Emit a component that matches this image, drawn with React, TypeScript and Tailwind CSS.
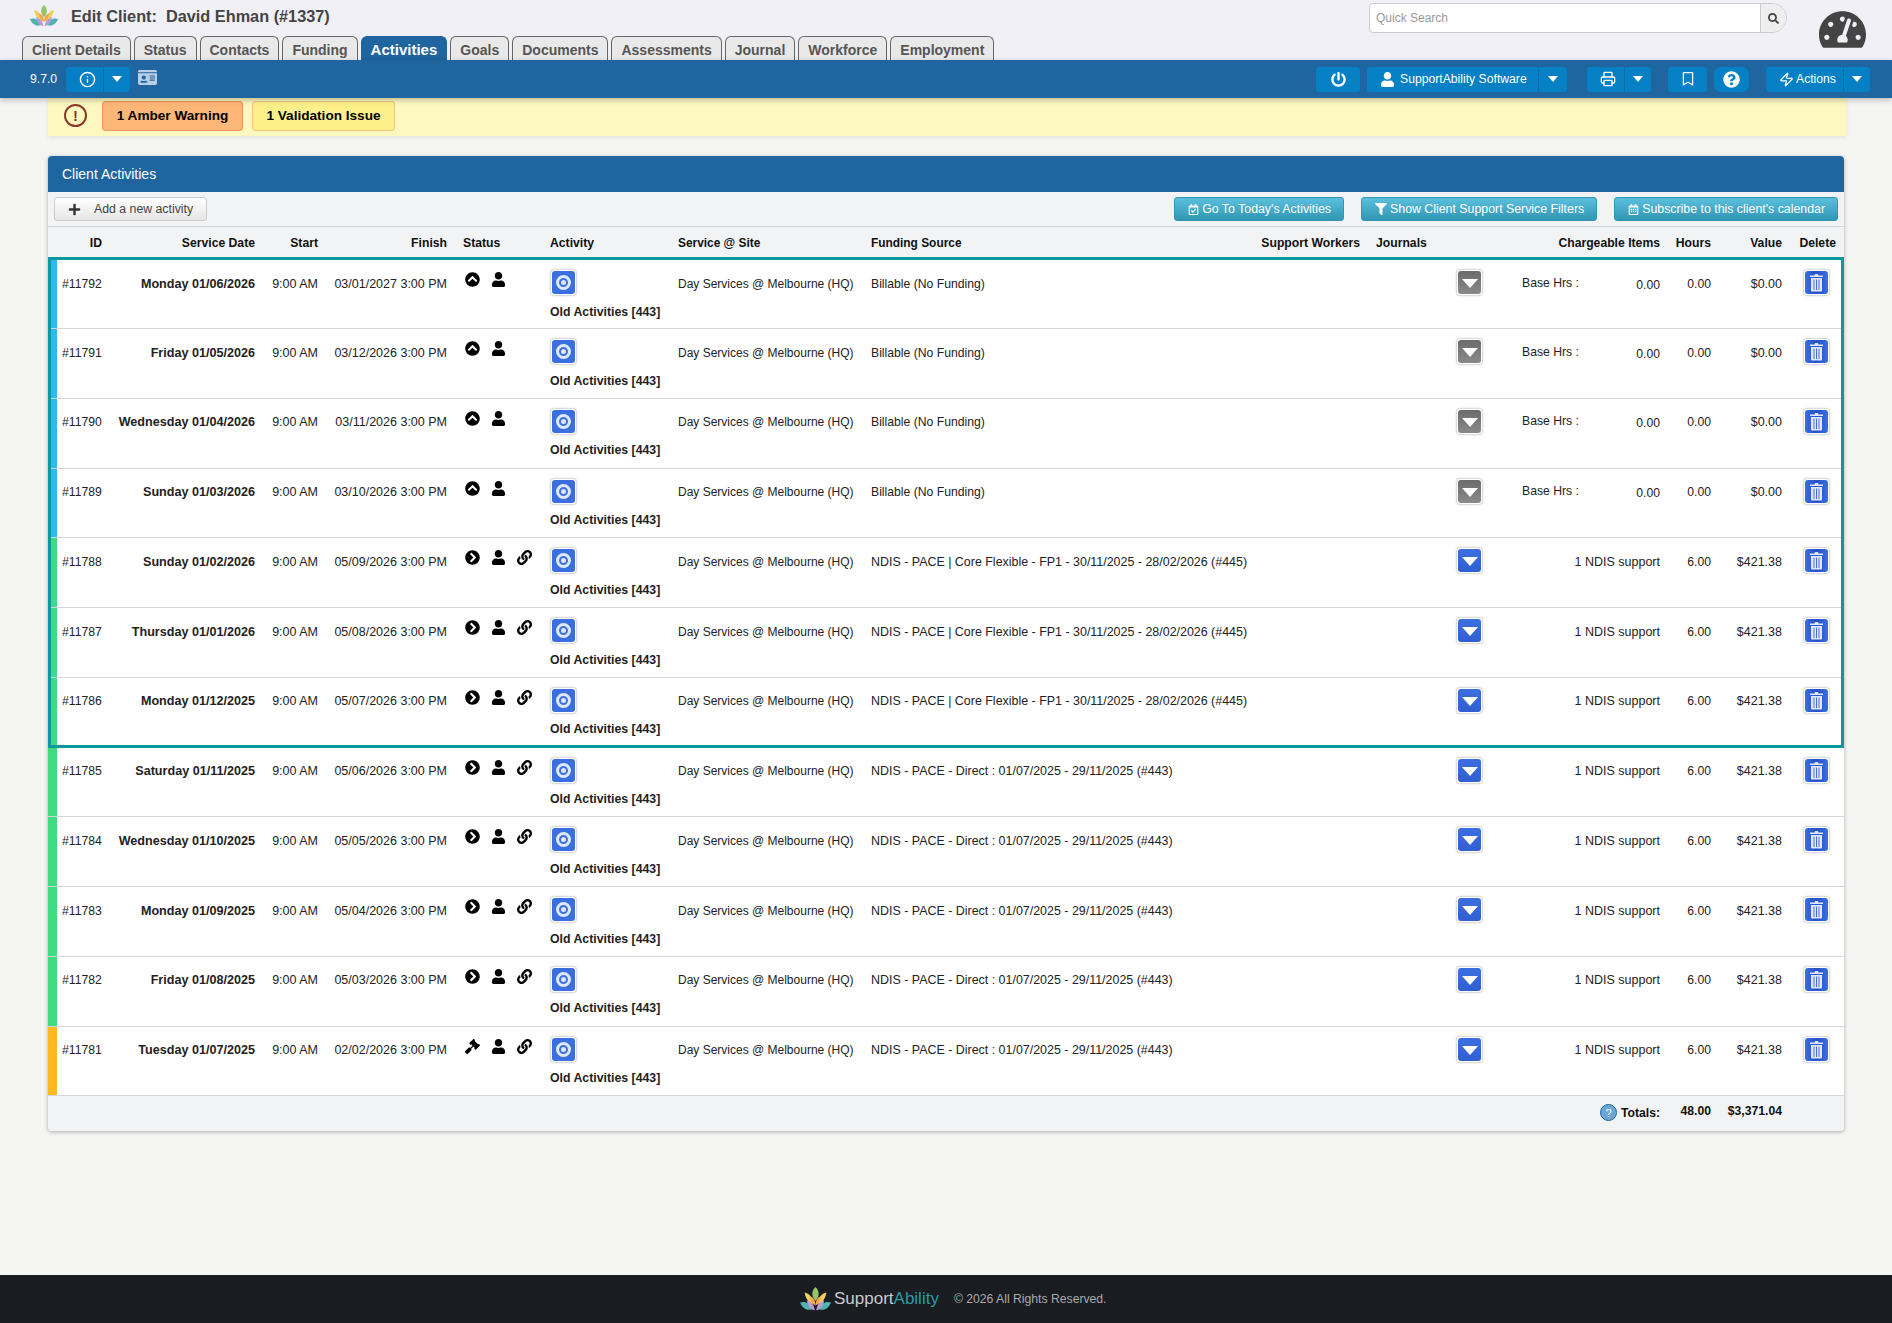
import { ReactNode } from 'react';
import {
  FaChevronCircleRight,
  FaChevronCircleUp,
  FaFilter,
  FaGavel,
  FaIdCard,
  FaLink,
  FaPlus,
  FaPowerOff,
  FaQuestionCircle,
  FaRegBookmark,
  FaRegCalendarAlt,
  FaRegCalendarCheck,
  FaSearch,
  FaTachometerAlt,
  FaUser,
} from 'react-icons/fa';
import { Info, Printer, Zap } from 'lucide-react';

const gridCols =
  'grid grid-cols-[62px_153px_63px_129px_88px_127px_193px_505px_146px_154px_51px_71px_54px]';

const tabs = [
  'Client Details',
  'Status',
  'Contacts',
  'Funding',
  'Activities',
  'Goals',
  'Documents',
  'Assessments',
  'Journal',
  'Workforce',
  'Employment',
];

const CORE = 'NDIS - PACE | Core Flexible - FP1 - 30/11/2025 - 28/02/2026 (#445)';
const DIRECT = 'NDIS - PACE - Direct : 01/07/2025 - 29/11/2025 (#443)';
const NONE = 'Billable (No Funding)';

type Row = { id: string; date: string; finish: string; funding: string; kind: 'up' | 'right' | 'gavel' };

const rows: Row[] = [
  { id: '#11792', date: 'Monday 01/06/2026', finish: '03/01/2027 3:00 PM', funding: NONE, kind: 'up' },
  { id: '#11791', date: 'Friday 01/05/2026', finish: '03/12/2026 3:00 PM', funding: NONE, kind: 'up' },
  { id: '#11790', date: 'Wednesday 01/04/2026', finish: '03/11/2026 3:00 PM', funding: NONE, kind: 'up' },
  { id: '#11789', date: 'Sunday 01/03/2026', finish: '03/10/2026 3:00 PM', funding: NONE, kind: 'up' },
  { id: '#11788', date: 'Sunday 01/02/2026', finish: '05/09/2026 3:00 PM', funding: CORE, kind: 'right' },
  { id: '#11787', date: 'Thursday 01/01/2026', finish: '05/08/2026 3:00 PM', funding: CORE, kind: 'right' },
  { id: '#11786', date: 'Monday 01/12/2025', finish: '05/07/2026 3:00 PM', funding: CORE, kind: 'right' },
  { id: '#11785', date: 'Saturday 01/11/2025', finish: '05/06/2026 3:00 PM', funding: DIRECT, kind: 'right' },
  { id: '#11784', date: 'Wednesday 01/10/2025', finish: '05/05/2026 3:00 PM', funding: DIRECT, kind: 'right' },
  { id: '#11783', date: 'Monday 01/09/2025', finish: '05/04/2026 3:00 PM', funding: DIRECT, kind: 'right' },
  { id: '#11782', date: 'Friday 01/08/2025', finish: '05/03/2026 3:00 PM', funding: DIRECT, kind: 'right' },
  { id: '#11781', date: 'Tuesday 01/07/2025', finish: '02/02/2026 3:00 PM', funding: DIRECT, kind: 'gavel' },
];

function Lotus({ size }: { size: number }) {
  return (
    <svg width={size} height={size * 0.8} viewBox="0 0 40 32">
      <path d="M0 20c6-2 12 0 15 9-7 2-12-2-15-9z" fill="#4fb3b0" />
      <path d="M40 20c-6-2-12 0-15 9 7 2 12-2 15-9z" fill="#4fb3b0" />
      <path d="M9 17c5 1 9 5 10 13-6-1-10-6-10-13z" fill="#b79ad6" />
      <path d="M31 17c-5 1-9 5-10 13 6-1 10-6 10-13z" fill="#b79ad6" />
      <path d="M6 7c6 1 10 6 12 15-7-2-11-7-12-15z" fill="#efcf5f" />
      <path d="M34 7c-6 1-10 6-12 15 7-2 11-7 12-15z" fill="#efcf5f" />
      <path d="M20 0c5 5 6 11 0 18-6-7-5-13 0-18z" fill="#93c66a" />
      <path d="M13 12c4 1 7 5 7 12-5-2-7-7-7-12z" fill="#f3a64b" />
      <path d="M27 12c-4 1-7 5-7 12 5-2 7-7 7-12z" fill="#f3a64b" />
    </svg>
  );
}

function ToolGroup({ children, w }: { children: ReactNode; w: string }) {
  return <div className={`flex h-[25px] items-center rounded-[3px] bg-[#0580c4] text-white ${w}`}>{children}</div>;
}

function Caret({ className }: { className: string }) {
  return (
    <span className={`flex h-full items-center justify-center border-l border-[#0f6aa3] ${className}`}>
      <span className="border-x-[5px] border-t-[6px] border-x-transparent border-t-white" />
    </span>
  );
}

function ActionBtn({ icon, label }: { icon: ReactNode; label: string }) {
  return (
    <button className="flex h-6 items-center gap-[3px] rounded-[3px] border border-[#2f96b4] bg-gradient-to-b from-[#5bc0de] to-[#2f96b4] pl-[13px] pr-3 text-[12.35px] text-white">
      {icon}
      {label}
    </button>
  );
}

function IconFrame({ children, className }: { children: ReactNode; className: string }) {
  return (
    <div className="flex h-[27px] w-[27px] items-center justify-center rounded-[4px] border border-[#dcdcdc] bg-white shadow-[0_0_2px_rgba(0,0,0,0.15)]">
      <div className={`flex h-[23px] w-[23px] items-center justify-center rounded-[3px] ${className}`}>{children}</div>
    </div>
  );
}

function ActivityRow({ row, first }: { row: Row; first: boolean }) {
  const bar = row.kind === 'up' ? 'border-l-[#2fb9f0]' : row.kind === 'right' ? 'border-l-[#3fdb80]' : 'border-l-[#fdb91f]';
  const billable = row.kind === 'up';
  return (
    <div className={`${gridCols} border-b border-[#d4d6da] bg-white ${first ? 'h-[72px] pt-[3px]' : 'h-[69.75px]'}`}>
      <div className={`border-l-[9px] pl-[5px] pt-[16.5px] ${bar}`}>{row.id}</div>
      <div className="pr-2 pt-[16.5px] text-right text-[12.6px] font-bold">{row.date}</div>
      <div className="pr-2 pt-[16.5px] text-right text-[12.5px]">9:00 AM</div>
      <div className="pr-2 pt-[16.5px] text-right text-[12.5px]">{row.finish}</div>
      <div className="flex items-start gap-[11px] pl-[10px] pt-[12px] text-[15px] text-black">
        {row.kind === 'up' && <FaChevronCircleUp />}
        {row.kind === 'right' && <FaChevronCircleRight />}
        {row.kind === 'gavel' && <FaGavel />}
        <FaUser />
        {!billable && <FaLink />}
      </div>
      <div className="pl-[7px] pt-[9px]">
        <IconFrame className="bg-[#3b6fe0]">
          <span className="flex h-[15px] w-[15px] items-center justify-center rounded-full border-[3px] border-[#dfe8fb]">
            <span className="h-[5px] w-[5px] rounded-full bg-[#dfe8fb]" />
          </span>
        </IconFrame>
        <div className="mt-[8.5px] whitespace-nowrap text-[12.3px] font-bold">Old Activities [443]</div>
      </div>
      <div className="pl-2 pt-[16.5px] text-xs whitespace-nowrap leading-[14px]">Day Services @ Melbourne (HQ)</div>
      <div className={`pl-2 pt-[16.5px] whitespace-nowrap ${billable ? '' : 'text-[12.45px]'}`}>{row.funding}</div>
      <div className="pl-[88px] pt-[9px]">
        <IconFrame className={billable ? 'bg-gradient-to-b from-[#6b6b6b] to-[#8a8a8a]' : 'bg-gradient-to-b from-[#3b6fe0] to-[#2f5fd0]'}>
          <span className="mt-[2px] border-x-[8px] border-t-[9px] border-x-transparent border-t-white" />
        </IconFrame>
      </div>
      {billable ? (
        <div className="flex justify-between pl-2 pr-2 pt-[15.5px]">
          <span>Base Hrs :</span>
          <span className="pt-[2px]">0.00</span>
        </div>
      ) : (
        <div className="pr-2 pt-[16.5px] text-right text-[12.5px] whitespace-nowrap">1 NDIS support</div>
      )}
      <div className="pr-2 pt-[16.5px] text-right">{billable ? '0.00' : '6.00'}</div>
      <div className="pr-2 pt-[16.5px] text-right text-[12.5px]">{billable ? '$0.00' : '$421.38'}</div>
      <div className="pl-[13px] pt-[9px]">
        <IconFrame className="bg-gradient-to-r from-[#3b6fe0] via-[#2550c8] to-[#3b6fe0]">
          <svg width="15" height="19" viewBox="0 0 15 19" fill="#dfe8fb">
            <path d="M1 2.500h4.500L6 1h3l.5 1.500H14V4H1z" />
            <path d="M2 5h11v12.500a1 1 0 0 1-1 1H3a1 1 0 0 1-1-1zm2.600 1.500v10.500h.8V6.500zm2.500 0v10.500h.8V6.500zm2.500 0v10.500h.8V6.500z" fillRule="evenodd" />
          </svg>
        </IconFrame>
      </div>
    </div>
  );
}

export default function App() {
  return (
    <div className="flex min-h-[1323px] flex-col bg-[#f5f5f3] font-['Liberation_Sans',Arial,sans-serif] text-[12.2px] leading-[14px] text-[#222]">
      <div className="flex h-[60px] justify-between bg-[#f0f0f6]">
        <div className="flex flex-col">
          <div className="flex h-9 items-center pb-1 pl-[30px]">
            <Lotus size={28} />
            <span className="ml-[13px] whitespace-pre text-[16.3px] font-bold text-[#444]">Edit Client:  David Ehman (#1337)</span>
          </div>
          <div className="ml-[22px] flex h-6 gap-[3px]">
            {tabs.map((t) => (
              <div
                key={t}
                className={`rounded-t-md border border-b-0 px-[9px] pt-[3px] font-bold ${
                  t === 'Activities' ? 'border-[#1f659f] bg-[#1f659f] text-[15px] leading-5 text-white' : 'border-[#666] bg-[#e9e9e9] text-sm text-[#555]'
                }`}
              >
                {t}
              </div>
            ))}
          </div>
        </div>
        <div className="flex pr-[26px]">
          <div className="mt-[3px] flex h-[30px] w-[418px] rounded-l-[4px] rounded-r-[15px] border border-[#ccc] bg-white">
            <div className="flex-1 px-[6px] pt-[6px] text-xs text-[#999]">Quick Search</div>
            <div className="flex w-[26px] items-center justify-center rounded-r-[15px] border-l border-[#ccc] bg-[#eee] text-[11px] text-[#444]">
              <FaSearch />
            </div>
          </div>
          <FaTachometerAlt className="ml-[32px] mt-[6px] text-[47px] text-[#444]" />
        </div>
      </div>

      <div className="relative z-10 flex h-[38px] items-center justify-between bg-[#1f659f] pl-[30px] pr-[22px] text-[12.2px] text-white shadow-[0_2px_6px_rgba(0,0,0,0.25)]">
        <div className="flex items-center">
          <span className="w-9">9.7.0</span>
          <ToolGroup w="w-16">
            <span className="flex w-[37px] justify-center pl-[5px]">
              <Info size={17} />
            </span>
            <Caret className="flex-1" />
          </ToolGroup>
          <FaIdCard className="-mt-1 ml-2 text-[19px] text-[#b9cfe6]" />
        </div>
        <div className="flex items-center">
          <ToolGroup w="w-11 justify-center">
            <FaPowerOff className="text-[15px]" />
          </ToolGroup>
          <div className="ml-[7px]">
            <ToolGroup w="w-[200px]">
              <span className="flex w-[171px] items-center gap-[5px] pl-[13px] whitespace-nowrap">
                <FaUser className="text-[15px]" />
                SupportAbility Software
              </span>
              <Caret className="flex-1" />
            </ToolGroup>
          </div>
          <div className="ml-5">
            <ToolGroup w="w-16">
              <span className="flex w-[37px] justify-center pl-[4px]">
                <Printer size={16} />
              </span>
              <Caret className="flex-1" />
            </ToolGroup>
          </div>
          <div className="ml-[17px]">
            <ToolGroup w="w-[39px] justify-center">
              <FaRegBookmark className="text-[14px]" />
            </ToolGroup>
          </div>
          <div className="ml-[7px]">
            <div className="flex h-[25px] w-[35px] items-center justify-center rounded-[7px] bg-[#0580c4]">
              <FaQuestionCircle className="text-[17px]" />
            </div>
          </div>
          <div className="ml-[17px]">
            <ToolGroup w="w-[104px]">
              <span className="flex w-[77px] items-center gap-[2px] pl-[13px]">
                <Zap size={15} />
                Actions
              </span>
              <Caret className="flex-1" />
            </ToolGroup>
          </div>
        </div>
      </div>

      <div className="ml-12 flex h-[38px] w-[1798px] items-center bg-[#fdf7c0] pb-[3px] pl-4 shadow-[0_2px_4px_rgba(0,0,0,0.08)]">
        <span className="flex h-[23px] w-[23px] items-center justify-center rounded-full border-2 border-[#8b3a2b] text-[15px] font-bold text-[#8b3a2b]">
          !
        </span>
        <button className="ml-[15px] h-[30px] w-[141px] rounded-[3px] border border-[#f4955a] bg-[#fdb777] text-[13.6px] font-bold text-black">
          1 Amber Warning
        </button>
        <button className="ml-[9px] h-[30px] w-[143px] rounded-[3px] border border-[#f5c77e] bg-[#fdf08a] text-[13.6px] font-bold text-black">
          1 Validation Issue
        </button>
      </div>

      <div className="ml-12 mt-5 w-[1796px] overflow-hidden rounded-[4px] bg-[#f2f3f5] shadow-[0_1px_4px_rgba(0,0,0,0.3)]">
        <div className="flex h-9 items-center bg-[#1f659f] pb-[1px] pl-[14px] text-[14px] text-white">Client Activities</div>
        <div className="flex h-[35px] items-center justify-between border-b border-[#d4d6da] pl-[6px] pr-[6px]">
          <button className="flex h-6 w-[153px] items-center rounded-[3px] border border-[#ccc] bg-gradient-to-b from-white to-[#e6e6e6] pl-[13px] text-[12.3px] text-[#444]">
            <FaPlus className="text-[13px] text-[#333]" />
            <span className="ml-[13px]">Add a new activity</span>
          </button>
          <div className="flex gap-[17px]">
            <ActionBtn icon={<FaRegCalendarCheck className="text-[11px]" />} label="Go To Today's Activities" />
            <ActionBtn icon={<FaFilter className="text-[12px]" />} label="Show Client Support Service Filters" />
            <ActionBtn icon={<FaRegCalendarAlt className="text-[11px]" />} label="Subscribe to this client's calendar" />
          </div>
        </div>
        <div className={`${gridCols} h-[30px] items-center pt-[1px] font-bold text-[#111]`}>
          <div className="pr-2 text-right">ID</div>
          <div className="pr-2 text-right">Service Date</div>
          <div className="pr-2 text-right">Start</div>
          <div className="pr-2 text-right">Finish</div>
          <div className="pl-2">Status</div>
          <div className="pl-[7px]">Activity</div>
          <div className="pl-2 text-[11.9px]">Service @ Site</div>
          <div className="flex justify-between px-2">
            <span className="text-[11.9px]">Funding Source</span>
            <span>Support Workers</span>
          </div>
          <div className="pl-2">Journals</div>
          <div className="pr-2 text-right">Chargeable Items</div>
          <div className="pr-2 text-right">Hours</div>
          <div className="pr-2 text-right">Value</div>
          <div className="pr-2 text-right">Delete</div>
        </div>
        <div className="outline-3 -outline-offset-3 outline-[#0a9a9e]">
          {rows.slice(0, 7).map((r, i) => (
            <ActivityRow key={r.id} row={r} first={i === 0} />
          ))}
        </div>
        {rows.slice(7).map((r) => (
          <ActivityRow key={r.id} row={r} first={false} />
        ))}
        <div className={`${gridCols} h-[35px] font-bold text-[#111]`}>
          <div className="col-span-10 flex items-center justify-end gap-[4px] pb-[2px] pr-2">
            <span className="flex h-[17px] w-[17px] items-center justify-center rounded-full border border-[#1f659f] bg-[#6aa7d6] text-[11px] font-normal text-white">
              ?
            </span>
            Totals:
          </div>
          <div className="pr-2 pt-2 text-right">48.00</div>
          <div className="pr-2 pt-2 text-right">$3,371.04</div>
        </div>
      </div>

      <div className="mt-auto flex h-12 items-center bg-[#191d21] pl-[800px]">
        <Lotus size={31} />
        <span className="ml-[3px] text-[17px] text-[#c9cbcc]">
          Support<span className="text-[#2a9aa4]">Ability</span>
        </span>
        <span className="ml-[15px] text-[12.2px] text-[#aaa]">© 2026 All Rights Reserved.</span>
      </div>
    </div>
  );
}
